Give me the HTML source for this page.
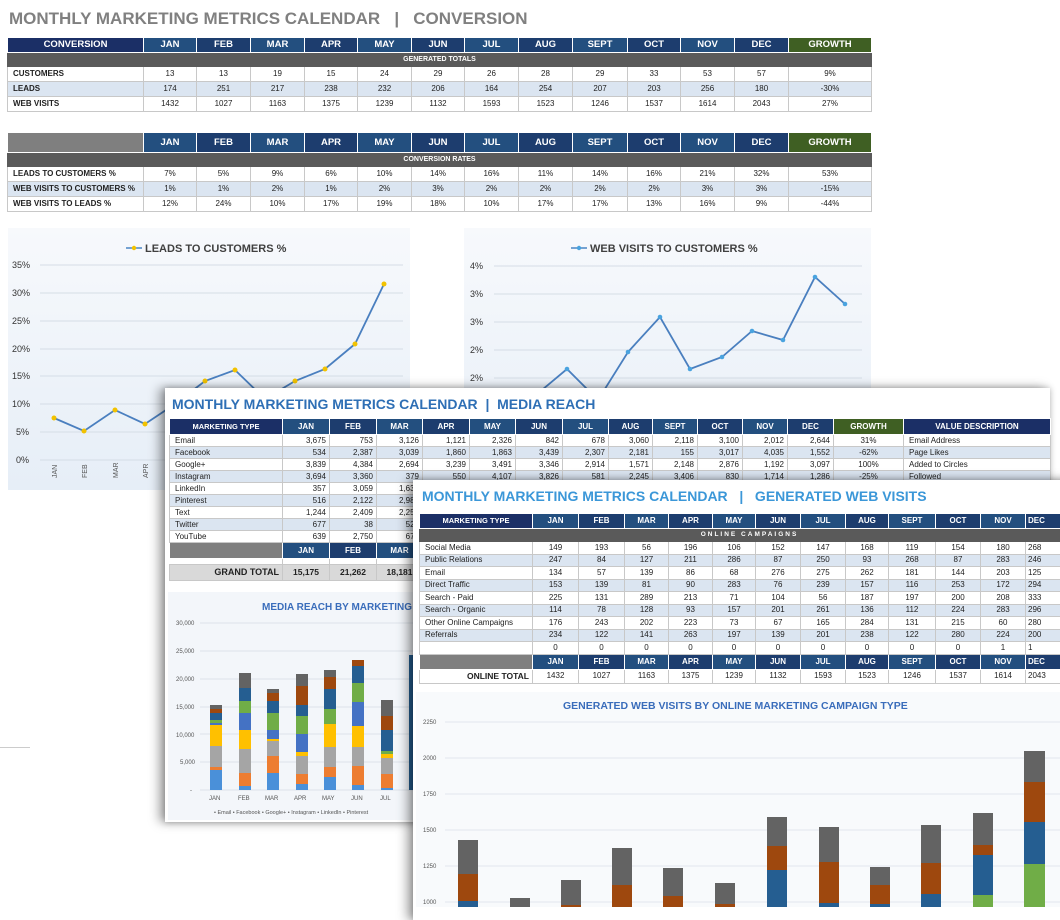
<!DOCTYPE html>
<html><head><meta charset="utf-8">
<style>
*{margin:0;padding:0;box-sizing:border-box}
body{width:1060px;height:907px;overflow:hidden;background:#fff;font-family:"Liberation Sans",sans-serif;position:relative}
.abs{position:absolute}
table{border-collapse:collapse;table-layout:fixed;position:absolute}
td{border:1px solid #c8c8c8;font-size:8px;text-align:center;overflow:hidden;white-space:nowrap;color:#222;padding:0 2px;line-height:1}
td.l{text-align:left;font-weight:bold;padding-left:5px}
td.n{text-align:left;font-weight:normal;padding-left:5px}
td.r{text-align:right;padding-right:3px}
tr.h td{color:#fff;font-weight:bold;font-size:9.5px;border-color:#fff}
td.nv{background:#1b2f66}
td.b1{background:#234f7f}
td.b2{background:#1d3d6e}
td.gr{background:#3f5f23}
td.gy{background:#7f7f7f}
tr.g td{background:#5a5a5a;color:#fff;font-weight:bold;font-size:7px;border-color:#5a5a5a}
tr.a td{background:#dbe5f1}
td.gg{background:#e4efdc}
.t1 tr.h{height:21px}.t1 tr.g{height:14px}.t1 tr.d{height:15px}
.sheet{position:absolute;background:#fff;box-shadow:-6px 0 10px rgba(0,0,0,.35),0 0 6px rgba(0,0,0,.25)}
.ttl{position:absolute;font-weight:bold;white-space:nowrap}
</style></head><body>

<div class="ttl" style="left:9px;top:9px;font-size:17px;color:#808080;">MONTHLY MARKETING METRICS CALENDAR &nbsp;&nbsp;| &nbsp;&nbsp;CONVERSION</div>

<table class="t1" style="left:7px;top:37px;width:864px">
<colgroup><col style="width:136px"><col style="width:53px"><col style="width:54px"><col style="width:54px"><col style="width:53px"><col style="width:54px"><col style="width:53px"><col style="width:54px"><col style="width:54px"><col style="width:55px"><col style="width:53px"><col style="width:54px"><col style="width:54px"><col style="width:83px"></colgroup>
<tr class="h d"><td class="nv">CONVERSION</td><td class="b1">JAN</td><td class="b2">FEB</td><td class="b1">MAR</td><td class="b2">APR</td><td class="b1">MAY</td><td class="b2">JUN</td><td class="b1">JUL</td><td class="b2">AUG</td><td class="b1">SEPT</td><td class="b2">OCT</td><td class="b1">NOV</td><td class="b2">DEC</td><td class="gr">GROWTH</td></tr>
<tr class="g"><td colspan="14">GENERATED TOTALS</td></tr>
<tr class="d"><td class="l">CUSTOMERS</td><td>13</td><td>13</td><td>19</td><td>15</td><td>24</td><td>29</td><td>26</td><td>28</td><td>29</td><td>33</td><td>53</td><td>57</td><td>9%</td></tr>
<tr class="d a"><td class="l">LEADS</td><td>174</td><td>251</td><td>217</td><td>238</td><td>232</td><td>206</td><td>164</td><td>254</td><td>207</td><td>203</td><td>256</td><td>180</td><td class="gg">-30%</td></tr>
<tr class="d"><td class="l">WEB VISITS</td><td>1432</td><td>1027</td><td>1163</td><td>1375</td><td>1239</td><td>1132</td><td>1593</td><td>1523</td><td>1246</td><td>1537</td><td>1614</td><td>2043</td><td>27%</td></tr>
</table>

<table class="t1" style="left:7px;top:132px;width:864px">
<colgroup><col style="width:136px"><col style="width:53px"><col style="width:54px"><col style="width:54px"><col style="width:53px"><col style="width:54px"><col style="width:53px"><col style="width:54px"><col style="width:54px"><col style="width:55px"><col style="width:53px"><col style="width:54px"><col style="width:54px"><col style="width:83px"></colgroup>
<tr class="h" style="height:20px"><td class="gy"></td><td class="b1">JAN</td><td class="b2">FEB</td><td class="b1">MAR</td><td class="b2">APR</td><td class="b1">MAY</td><td class="b2">JUN</td><td class="b1">JUL</td><td class="b2">AUG</td><td class="b1">SEPT</td><td class="b2">OCT</td><td class="b1">NOV</td><td class="b2">DEC</td><td class="gr">GROWTH</td></tr>
<tr class="g"><td colspan="14">CONVERSION RATES</td></tr>
<tr class="d"><td class="l">LEADS TO CUSTOMERS %</td><td>7%</td><td>5%</td><td>9%</td><td>6%</td><td>10%</td><td>14%</td><td>16%</td><td>11%</td><td>14%</td><td>16%</td><td>21%</td><td>32%</td><td>53%</td></tr>
<tr class="d a"><td class="l">WEB VISITS TO CUSTOMERS %</td><td>1%</td><td>1%</td><td>2%</td><td>1%</td><td>2%</td><td>3%</td><td>2%</td><td>2%</td><td>2%</td><td>2%</td><td>3%</td><td>3%</td><td class="gg">-15%</td></tr>
<tr class="d"><td class="l">WEB VISITS TO LEADS %</td><td>12%</td><td>24%</td><td>10%</td><td>17%</td><td>19%</td><td>18%</td><td>10%</td><td>17%</td><td>17%</td><td>13%</td><td>16%</td><td>9%</td><td>-44%</td></tr>
</table>

<!-- left line chart -->
<svg class="abs" style="left:0;top:225px" width="880" height="270" viewBox="0 225 880 270">
<defs><linearGradient id="bg" x1="0" y1="0" x2="0" y2="1"><stop offset="0" stop-color="#f7f9fc"/><stop offset="1" stop-color="#e6eef7"/></linearGradient></defs>
<rect x="8" y="228" width="402" height="262" fill="url(#bg)"/>
<rect x="464" y="228" width="407" height="262" fill="url(#bg)"/>
<g stroke="#d5dde6" stroke-width="1">
<line x1="40" y1="265" x2="403" y2="265"/><line x1="40" y1="293" x2="403" y2="293"/><line x1="40" y1="321" x2="403" y2="321"/><line x1="40" y1="349" x2="403" y2="349"/><line x1="40" y1="376" x2="403" y2="376"/><line x1="40" y1="404" x2="403" y2="404"/><line x1="40" y1="432" x2="403" y2="432"/><line x1="40" y1="460" x2="403" y2="460"/>
<line x1="494" y1="266" x2="862" y2="266"/><line x1="494" y1="294" x2="862" y2="294"/><line x1="494" y1="322" x2="862" y2="322"/><line x1="494" y1="350" x2="862" y2="350"/><line x1="494" y1="378" x2="862" y2="378"/>
</g>
<g font-family="Liberation Sans" font-size="9" fill="#333">
<text x="12" y="268">35%</text><text x="12" y="296">30%</text><text x="12" y="324">25%</text><text x="12" y="352">20%</text><text x="12" y="379">15%</text><text x="12" y="407">10%</text><text x="16" y="435">5%</text><text x="16" y="463">0%</text>
<text x="470" y="269">4%</text><text x="470" y="297">3%</text><text x="470" y="325">3%</text><text x="470" y="353">2%</text><text x="470" y="381">2%</text>
</g>
<g font-family="Liberation Sans" font-size="7" fill="#555">
<text transform="translate(57,478) rotate(-90)">JAN</text><text transform="translate(87,478) rotate(-90)">FEB</text><text transform="translate(118,478) rotate(-90)">MAR</text><text transform="translate(148,478) rotate(-90)">APR</text>
</g>
<text x="145" y="252" font-family="Liberation Sans" font-size="11" font-weight="bold" fill="#404040">LEADS TO CUSTOMERS %</text>
<line x1="126" y1="248" x2="142" y2="248" stroke="#4a86c5" stroke-width="1.5"/><circle cx="134" cy="248" r="2.2" fill="#f2c200"/>
<text x="590" y="252" font-family="Liberation Sans" font-size="11" font-weight="bold" fill="#404040">WEB VISITS TO CUSTOMERS %</text>
<line x1="571" y1="248" x2="587" y2="248" stroke="#4a86c5" stroke-width="1.5"/><circle cx="579" cy="248" r="2.2" fill="#4aa3df"/>
<polyline fill="none" stroke="#4a7fbf" stroke-width="1.8" points="54,418 84,431 115,410 145,424 175,404 205,381 235,370 265,399 295,381 325,369 355,344 384,284"/>
<g fill="#f2c200"><circle cx="54" cy="418" r="2.5"/><circle cx="84" cy="431" r="2.5"/><circle cx="115" cy="410" r="2.5"/><circle cx="145" cy="424" r="2.5"/><circle cx="205" cy="381" r="2.5"/><circle cx="235" cy="370" r="2.5"/><circle cx="295" cy="381" r="2.5"/><circle cx="325" cy="369" r="2.5"/><circle cx="355" cy="344" r="2.5"/><circle cx="384" cy="284" r="2.5"/></g>
<polyline fill="none" stroke="#4a7fbf" stroke-width="1.8" points="505,410 536,395 567,369 598,400 628,352 660,317 690,369 722,357 752,331 783,340 815,277 845,304"/>
<g fill="#4aa3df"><circle cx="567" cy="369" r="2.3"/><circle cx="628" cy="352" r="2.3"/><circle cx="660" cy="317" r="2.3"/><circle cx="690" cy="369" r="2.3"/><circle cx="722" cy="357" r="2.3"/><circle cx="752" cy="331" r="2.3"/><circle cx="783" cy="340" r="2.3"/><circle cx="815" cy="277" r="2.3"/><circle cx="845" cy="304" r="2.3"/></g>
</svg>
<div class="abs" style="left:0;top:747px;width:30px;height:1px;background:#ccc"></div>

<!-- MEDIA REACH SHEET -->
<div class="sheet" style="left:165px;top:388px;width:885px;height:434px">
<div class="ttl" style="left:7px;top:8px;font-size:14px;color:#2e6fb5;">MONTHLY MARKETING METRICS CALENDAR &nbsp;| &nbsp;MEDIA REACH</div>
<table style="left:4px;top:30px;width:881px">
<colgroup><col style="width:113px"><col style="width:47px"><col style="width:47px"><col style="width:46px"><col style="width:47px"><col style="width:46px"><col style="width:47px"><col style="width:46px"><col style="width:44px"><col style="width:45px"><col style="width:45px"><col style="width:45px"><col style="width:46px"><col style="width:70px"><col style="width:147px"></colgroup>
<tr class="h" style="height:16px"><td class="nv" style="font-size:7.5px">MARKETING TYPE</td><td class="b1" style="font-size:8px">JAN</td><td class="b2" style="font-size:8px">FEB</td><td class="b1" style="font-size:8px">MAR</td><td class="b2" style="font-size:8px">APR</td><td class="b1" style="font-size:8px">MAY</td><td class="b2" style="font-size:8px">JUN</td><td class="b1" style="font-size:8px">JUL</td><td class="b2" style="font-size:8px">AUG</td><td class="b1" style="font-size:8px">SEPT</td><td class="b2" style="font-size:8px">OCT</td><td class="b1" style="font-size:8px">NOV</td><td class="b2" style="font-size:8px">DEC</td><td class="gr" style="font-size:8px">GROWTH</td><td class="nv" style="font-size:8px">VALUE DESCRIPTION</td></tr>
<tr style="height:12px"><td class="n">Email</td><td class="r">3,675</td><td class="r">753</td><td class="r">3,126</td><td class="r">1,121</td><td class="r">2,326</td><td class="r">842</td><td class="r">678</td><td class="r">3,060</td><td class="r">2,118</td><td class="r">3,100</td><td class="r">2,012</td><td class="r">2,644</td><td>31%</td><td class="n">Email Address</td></tr>
<tr class="a" style="height:12px"><td class="n">Facebook</td><td class="r">534</td><td class="r">2,387</td><td class="r">3,039</td><td class="r">1,860</td><td class="r">1,863</td><td class="r">3,439</td><td class="r">2,307</td><td class="r">2,181</td><td class="r">155</td><td class="r">3,017</td><td class="r">4,035</td><td class="r">1,552</td><td class="gg">-62%</td><td class="n">Page Likes</td></tr>
<tr style="height:12px"><td class="n">Google+</td><td class="r">3,839</td><td class="r">4,384</td><td class="r">2,694</td><td class="r">3,239</td><td class="r">3,491</td><td class="r">3,346</td><td class="r">2,914</td><td class="r">1,571</td><td class="r">2,148</td><td class="r">2,876</td><td class="r">1,192</td><td class="r">3,097</td><td>100%</td><td class="n">Added to Circles</td></tr>
<tr class="a" style="height:12px"><td class="n">Instagram</td><td class="r">3,694</td><td class="r">3,360</td><td class="r">379</td><td class="r">550</td><td class="r">4,107</td><td class="r">3,826</td><td class="r">581</td><td class="r">2,245</td><td class="r">3,406</td><td class="r">830</td><td class="r">1,714</td><td class="r">1,286</td><td class="gg">-25%</td><td class="n">Followed</td></tr>
<tr style="height:12px"><td class="n">LinkedIn</td><td class="r">357</td><td class="r">3,059</td><td class="r">1,630</td><td colspan="12"></td></tr>
<tr class="a" style="height:12px"><td class="n">Pinterest</td><td class="r">516</td><td class="r">2,122</td><td class="r">2,980</td><td colspan="12"></td></tr>
<tr style="height:12px"><td class="n">Text</td><td class="r">1,244</td><td class="r">2,409</td><td class="r">2,250</td><td colspan="12"></td></tr>
<tr class="a" style="height:12px"><td class="n">Twitter</td><td class="r">677</td><td class="r">38</td><td class="r">520</td><td colspan="12"></td></tr>
<tr style="height:12px"><td class="n">YouTube</td><td class="r">639</td><td class="r">2,750</td><td class="r">670</td><td colspan="12"></td></tr>
<tr class="h" style="height:16px"><td class="gy"></td><td class="b1" style="font-size:8px">JAN</td><td class="b2" style="font-size:8px">FEB</td><td class="b1" style="font-size:8px">MAR</td><td colspan="12"></td></tr>
<tr style="height:6px"><td style="border:none"></td><td></td><td></td><td></td><td colspan="12" style="border:none"></td></tr>
<tr style="height:16px;background:#d9d9d9"><td class="r" style="font-weight:bold;font-size:9px">GRAND TOTAL</td><td style="font-weight:bold;font-size:8.5px">15,175</td><td style="font-weight:bold;font-size:8.5px">21,262</td><td style="font-weight:bold;font-size:8.5px">18,181</td><td colspan="12"></td></tr>
</table>
<svg class="abs" style="left:0;top:202px" width="250" height="232" viewBox="165 590 250 232">
<rect x="168" y="592" width="247" height="228" fill="#f3f6fa"/>
<text x="262" y="610" font-family="Liberation Sans" font-size="10" font-weight="bold" fill="#3a6dbb">MEDIA REACH BY MARKETING</text>
<g stroke="#dde3ea"><line x1="200" y1="623" x2="415" y2="623"/><line x1="200" y1="651" x2="415" y2="651"/><line x1="200" y1="679" x2="415" y2="679"/><line x1="200" y1="707" x2="415" y2="707"/><line x1="200" y1="734" x2="415" y2="734"/><line x1="200" y1="762" x2="415" y2="762"/><line x1="200" y1="790" x2="415" y2="790"/></g>
<g font-family="Liberation Sans" font-size="6" fill="#555"><text x="176" y="625">30,000</text><text x="176" y="653">25,000</text><text x="176" y="681">20,000</text><text x="176" y="709">15,000</text><text x="176" y="737">10,000</text><text x="180" y="764">5,000</text><text x="190" y="792">-</text>
<text x="209" y="800">JAN</text><text x="238" y="800">FEB</text><text x="265" y="800">MAR</text><text x="294" y="800">APR</text><text x="322" y="800">MAY</text><text x="351" y="800">JUN</text><text x="380" y="800">JUL</text>
<text x="214" y="814" font-size="5.5">• Email  • Facebook  • Google+  • Instagram  • LinkedIn  • Pinterest</text></g>
<!-- bars: bottom 790 -->
<g>
<rect x="210" y="770" width="12" height="20" fill="#4a90d9"/><rect x="210" y="767" width="12" height="3" fill="#ed7d31"/><rect x="210" y="746" width="12" height="21" fill="#a5a5a5"/><rect x="210" y="725" width="12" height="21" fill="#ffc000"/><rect x="210" y="723" width="12" height="2" fill="#4472c4"/><rect x="210" y="720" width="12" height="3" fill="#70ad47"/><rect x="210" y="713" width="12" height="7" fill="#255e91"/><rect x="210" y="709" width="12" height="4" fill="#9e480e"/><rect x="210" y="705" width="12" height="4" fill="#636363"/>
<rect x="239" y="786" width="12" height="4" fill="#4a90d9"/><rect x="239" y="773" width="12" height="13" fill="#ed7d31"/><rect x="239" y="749" width="12" height="24" fill="#a5a5a5"/><rect x="239" y="730" width="12" height="19" fill="#ffc000"/><rect x="239" y="713" width="12" height="17" fill="#4472c4"/><rect x="239" y="701" width="12" height="12" fill="#70ad47"/><rect x="239" y="688" width="12" height="13" fill="#255e91"/><rect x="239" y="673" width="12" height="15" fill="#636363"/>
<rect x="267" y="773" width="12" height="17" fill="#4a90d9"/><rect x="267" y="756" width="12" height="17" fill="#ed7d31"/><rect x="267" y="741" width="12" height="15" fill="#a5a5a5"/><rect x="267" y="739" width="12" height="2" fill="#ffc000"/><rect x="267" y="730" width="12" height="9" fill="#4472c4"/><rect x="267" y="713" width="12" height="17" fill="#70ad47"/><rect x="267" y="701" width="12" height="12" fill="#255e91"/><rect x="267" y="693" width="12" height="8" fill="#9e480e"/><rect x="267" y="689" width="12" height="4" fill="#636363"/>
<rect x="296" y="784" width="12" height="6" fill="#4a90d9"/><rect x="296" y="774" width="12" height="10" fill="#ed7d31"/><rect x="296" y="756" width="12" height="18" fill="#a5a5a5"/><rect x="296" y="752" width="12" height="4" fill="#ffc000"/><rect x="296" y="734" width="12" height="18" fill="#4472c4"/><rect x="296" y="716" width="12" height="18" fill="#70ad47"/><rect x="296" y="705" width="12" height="11" fill="#255e91"/><rect x="296" y="686" width="12" height="19" fill="#9e480e"/><rect x="296" y="674" width="12" height="12" fill="#636363"/>
<rect x="324" y="777" width="12" height="13" fill="#4a90d9"/><rect x="324" y="767" width="12" height="10" fill="#ed7d31"/><rect x="324" y="747" width="12" height="20" fill="#a5a5a5"/><rect x="324" y="724" width="12" height="23" fill="#ffc000"/><rect x="324" y="709" width="12" height="15" fill="#70ad47"/><rect x="324" y="689" width="12" height="20" fill="#255e91"/><rect x="324" y="677" width="12" height="12" fill="#9e480e"/><rect x="324" y="670" width="12" height="7" fill="#636363"/>
<rect x="352" y="785" width="12" height="5" fill="#4a90d9"/><rect x="352" y="766" width="12" height="19" fill="#ed7d31"/><rect x="352" y="747" width="12" height="19" fill="#a5a5a5"/><rect x="352" y="726" width="12" height="21" fill="#ffc000"/><rect x="352" y="702" width="12" height="24" fill="#4472c4"/><rect x="352" y="683" width="12" height="19" fill="#70ad47"/><rect x="352" y="666" width="12" height="17" fill="#255e91"/><rect x="352" y="660" width="12" height="6" fill="#9e480e"/>
<rect x="381" y="788" width="12" height="2" fill="#4a90d9"/><rect x="381" y="774" width="12" height="14" fill="#ed7d31"/><rect x="381" y="758" width="12" height="16" fill="#a5a5a5"/><rect x="381" y="754" width="12" height="4" fill="#ffc000"/><rect x="381" y="751" width="12" height="3" fill="#70ad47"/><rect x="381" y="730" width="12" height="21" fill="#255e91"/><rect x="381" y="716" width="12" height="14" fill="#9e480e"/><rect x="381" y="700" width="12" height="16" fill="#636363"/>
<rect x="409" y="655" width="6" height="135" fill="#255e91"/>
</g>
</svg>
</div>

<!-- WEB VISITS SHEET -->
<div class="sheet" style="left:413px;top:480px;width:660px;height:440px">
<div class="ttl" style="left:9px;top:8px;font-size:14px;color:#3b97d8;">MONTHLY MARKETING METRICS CALENDAR &nbsp;&nbsp;| &nbsp;&nbsp;GENERATED WEB VISITS</div>
<table style="left:6px;top:33px;width:660px">
<colgroup><col style="width:113px"><col style="width:46px"><col style="width:46px"><col style="width:44px"><col style="width:44px"><col style="width:43px"><col style="width:45px"><col style="width:45px"><col style="width:43px"><col style="width:47px"><col style="width:45px"><col style="width:45px"><col style="width:54px"></colgroup>
<tr class="h" style="height:15px"><td class="nv" style="font-size:7.5px">MARKETING TYPE</td><td class="b1" style="font-size:8px">JAN</td><td class="b2" style="font-size:8px">FEB</td><td class="b1" style="font-size:8px">MAR</td><td class="b2" style="font-size:8px">APR</td><td class="b1" style="font-size:8px">MAY</td><td class="b2" style="font-size:8px">JUN</td><td class="b1" style="font-size:8px">JUL</td><td class="b2" style="font-size:8px">AUG</td><td class="b1" style="font-size:8px">SEPT</td><td class="b2" style="font-size:8px">OCT</td><td class="b1" style="font-size:8px">NOV</td><td class="b2" style="font-size:8px;text-align:left">DEC</td></tr>
<tr class="g" style="height:13px"><td colspan="13" style="letter-spacing:2px;font-size:6.5px">ONLINE CAMPAIGNS</td></tr>
<tr style="height:12.5px"><td class="n">Social Media</td><td>149</td><td>193</td><td>56</td><td>196</td><td>106</td><td>152</td><td>147</td><td>168</td><td>119</td><td>154</td><td>180</td><td style="text-align:left">268</td></tr>
<tr class="a" style="height:12.5px"><td class="n">Public Relations</td><td>247</td><td>84</td><td>127</td><td>211</td><td>286</td><td>87</td><td>250</td><td>93</td><td>268</td><td>87</td><td>283</td><td style="text-align:left">246</td></tr>
<tr style="height:12.5px"><td class="n">Email</td><td>134</td><td>57</td><td>139</td><td>86</td><td>68</td><td>276</td><td>275</td><td>262</td><td>181</td><td>144</td><td>203</td><td style="text-align:left">125</td></tr>
<tr class="a" style="height:12.5px"><td class="n">Direct Traffic</td><td>153</td><td>139</td><td>81</td><td>90</td><td>283</td><td>76</td><td>239</td><td>157</td><td>116</td><td>253</td><td>172</td><td style="text-align:left">294</td></tr>
<tr style="height:12.5px"><td class="n">Search - Paid</td><td>225</td><td>131</td><td>289</td><td>213</td><td>71</td><td>104</td><td>56</td><td>187</td><td>197</td><td>200</td><td>208</td><td style="text-align:left">333</td></tr>
<tr class="a" style="height:12.5px"><td class="n">Search - Organic</td><td>114</td><td>78</td><td>128</td><td>93</td><td>157</td><td>201</td><td>261</td><td>136</td><td>112</td><td>224</td><td>283</td><td style="text-align:left">296</td></tr>
<tr style="height:12.5px"><td class="n">Other Online Campaigns</td><td>176</td><td>243</td><td>202</td><td>223</td><td>73</td><td>67</td><td>165</td><td>284</td><td>131</td><td>215</td><td>60</td><td style="text-align:left">280</td></tr>
<tr class="a" style="height:12.5px"><td class="n">Referrals</td><td>234</td><td>122</td><td>141</td><td>263</td><td>197</td><td>139</td><td>201</td><td>238</td><td>122</td><td>280</td><td>224</td><td style="text-align:left">200</td></tr>
<tr style="height:12.5px"><td class="n"></td><td>0</td><td>0</td><td>0</td><td>0</td><td>0</td><td>0</td><td>0</td><td>0</td><td>0</td><td>0</td><td>1</td><td style="text-align:left">1</td></tr>
<tr class="h" style="height:15px"><td class="gy"></td><td class="b1" style="font-size:8px">JAN</td><td class="b2" style="font-size:8px">FEB</td><td class="b1" style="font-size:8px">MAR</td><td class="b2" style="font-size:8px">APR</td><td class="b1" style="font-size:8px">MAY</td><td class="b2" style="font-size:8px">JUN</td><td class="b1" style="font-size:8px">JUL</td><td class="b2" style="font-size:8px">AUG</td><td class="b1" style="font-size:8px">SEPT</td><td class="b2" style="font-size:8px">OCT</td><td class="b1" style="font-size:8px">NOV</td><td class="b2" style="font-size:8px;text-align:left">DEC</td></tr>
<tr style="height:14px"><td class="r" style="font-weight:bold;font-size:8.5px">ONLINE TOTAL</td><td>1432</td><td>1027</td><td>1163</td><td>1375</td><td>1239</td><td>1132</td><td>1593</td><td>1523</td><td>1246</td><td>1537</td><td>1614</td><td style="text-align:left">2043</td></tr>
</table>
<svg class="abs" style="left:0;top:210px" width="647" height="217" viewBox="413 690 647 217">
<rect x="416" y="692" width="644" height="215" fill="#f8fafc"/>
<text x="563" y="709" font-family="Liberation Sans" font-size="10.5" font-weight="bold" fill="#3a6dbb">GENERATED WEB VISITS BY ONLINE MARKETING CAMPAIGN TYPE</text>
<g stroke="#e2e7ee"><line x1="445" y1="722" x2="1060" y2="722"/><line x1="445" y1="758" x2="1060" y2="758"/><line x1="445" y1="794" x2="1060" y2="794"/><line x1="445" y1="830" x2="1060" y2="830"/><line x1="445" y1="866" x2="1060" y2="866"/><line x1="445" y1="902" x2="1060" y2="902"/></g>
<g font-family="Liberation Sans" font-size="6" fill="#555"><text x="423" y="724">2250</text><text x="423" y="760">2000</text><text x="423" y="796">1750</text><text x="423" y="832">1500</text><text x="423" y="868">1250</text><text x="423" y="904">1000</text></g>
<g>
<rect x="458" y="840" width="20" height="34" fill="#636363"/><rect x="458" y="874" width="20" height="27" fill="#9e480e"/><rect x="458" y="901" width="20" height="10" fill="#255e91"/>
<rect x="510" y="898" width="20" height="12" fill="#636363"/>
<rect x="561" y="880" width="20" height="25" fill="#636363"/><rect x="561" y="905" width="20" height="5" fill="#9e480e"/>
<rect x="612" y="848" width="20" height="37" fill="#636363"/><rect x="612" y="885" width="20" height="25" fill="#9e480e"/>
<rect x="663" y="868" width="20" height="28" fill="#636363"/><rect x="663" y="896" width="20" height="14" fill="#9e480e"/>
<rect x="715" y="883" width="20" height="21" fill="#636363"/><rect x="715" y="904" width="20" height="6" fill="#9e480e"/>
<rect x="767" y="817" width="20" height="29" fill="#636363"/><rect x="767" y="846" width="20" height="24" fill="#9e480e"/><rect x="767" y="870" width="20" height="40" fill="#255e91"/>
<rect x="819" y="827" width="20" height="35" fill="#636363"/><rect x="819" y="862" width="20" height="41" fill="#9e480e"/><rect x="819" y="903" width="20" height="7" fill="#255e91"/>
<rect x="870" y="867" width="20" height="18" fill="#636363"/><rect x="870" y="885" width="20" height="19" fill="#9e480e"/><rect x="870" y="904" width="20" height="6" fill="#255e91"/>
<rect x="921" y="825" width="20" height="38" fill="#636363"/><rect x="921" y="863" width="20" height="31" fill="#9e480e"/><rect x="921" y="894" width="20" height="16" fill="#255e91"/>
<rect x="973" y="813" width="20" height="32" fill="#636363"/><rect x="973" y="845" width="20" height="10" fill="#9e480e"/><rect x="973" y="855" width="20" height="40" fill="#255e91"/><rect x="973" y="895" width="20" height="15" fill="#70ad47"/>
<rect x="1024" y="751" width="21" height="31" fill="#636363"/><rect x="1024" y="782" width="21" height="40" fill="#9e480e"/><rect x="1024" y="822" width="21" height="42" fill="#255e91"/><rect x="1024" y="864" width="21" height="46" fill="#70ad47"/>
</g>
</svg>
</div>
</body></html>
